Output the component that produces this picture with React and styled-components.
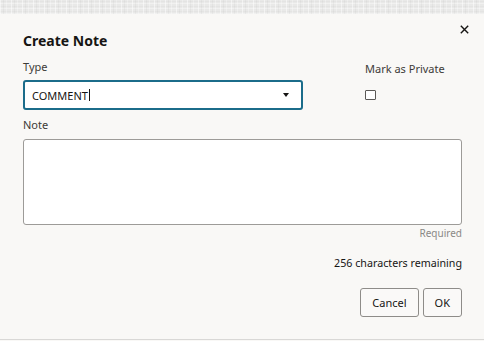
import React from "react";
import styled, { createGlobalStyle } from "styled-components";

const Global = createGlobalStyle`
  html, body { margin: 0; padding: 0; background: #f9f8f6; }
  body { font-family: "Noto Sans", "Open Sans", sans-serif; color: #161513; }
  * { box-sizing: border-box; }
`;

const Backdrop = styled.div`
  height: 14px;
  background-color: #e9e9e8;
  background-image:
    repeating-linear-gradient(90deg, rgba(255,255,255,0.5) 0 1px, transparent 1px 3px, rgba(0,0,0,0.03) 3px 4px, transparent 4px 6px, rgba(255,255,255,0.3) 6px 7px, transparent 7px 11px),
    repeating-linear-gradient(0deg, rgba(255,255,255,0.35) 0 1px, transparent 1px 2px, rgba(0,0,0,0.025) 2px 3px, transparent 3px 5px);
`;

const Dialog = styled.div`
  background: #f9f8f6;
  padding: 5px 22px 22px 23px;
  height: 326px;
  border-bottom: 1px solid #d9d8d6;
  display: flex;
  flex-direction: column;
`;

const Header = styled.div`
  display: flex;
  align-items: flex-start;
  justify-content: space-between;
`;

const Title = styled.h1`
  margin: 12px 0 0;
  font-size: 14px;
  line-height: 20px;
  font-weight: 700;
  color: #161513;
`;

const CloseButton = styled.button`
  width: 20px;
  height: 20px;
  margin-right: -12px;
  padding: 0;
  border: 0;
  background: transparent;
  display: flex;
  align-items: center;
  justify-content: center;
  color: #161513;
`;

const FormGrid = styled.div`
  display: grid;
  grid-template-columns: 280px 1fr;
  column-gap: 62px;
  margin-top: 8px;
`;

const Field = styled.div`
  display: flex;
  flex-direction: column;
  padding-top: ${(p) => p.$offset || 0}px;
`;

const Label = styled.label`
  font-size: 11px;
  line-height: 16px;
  color: #3d3b38;
  margin-bottom: ${(p) => p.$gap}px;
`;

const Select = styled.div`
  height: 30px;
  border: 2px solid #1b6c8a;
  border-radius: 3px;
  background: #fff;
  display: flex;
  align-items: center;
  padding: 0 12px 0 7px;
  font-size: 11px;
  color: #161513;
`;

const SelectValue = styled.span`
  flex: 1;
  display: flex;
  align-items: center;
`;

const Cursor = styled.span`
  display: inline-block;
  width: 1px;
  height: 12px;
  background: #161513;
  margin-left: 1px;
`;

const Caret = styled.span`
  width: 0;
  height: 0;
  border-left: 3.5px solid transparent;
  border-right: 3.5px solid transparent;
  border-top: 4px solid #161513;
`;

const Checkbox = styled.span`
  width: 11px;
  height: 10px;
  border: 1px solid #5b5956;
  border-radius: 1px;
  background: #fff;
`;

const NoteField = styled.div`
  display: flex;
  flex-direction: column;
  margin-top: 7px;
`;

const TextArea = styled.div`
  height: 86px;
  border: 1px solid #9d9b98;
  border-radius: 3px;
  background: #fff;
`;

const Hint = styled.div`
  text-align: right;
  font-size: 10px;
  line-height: 14px;
  color: #8a8886;
  margin-top: 1px;
`;

const Counter = styled.div`
  text-align: right;
  font-size: 10.7px;
  line-height: 16px;
  color: #161513;
  margin-top: 15px;
`;

const Actions = styled.div`
  display: flex;
  justify-content: flex-end;
  gap: 4px;
  margin-top: 17px;
`;

const Button = styled.button`
  height: 29px;
  padding: 0 11px;
  border: 1px solid #8e8c89;
  border-radius: 3px;
  background: #faf9f8;
  font-family: "Noto Sans", "Open Sans", sans-serif;
  font-size: 11px;
  color: #161513;
`;

export default function App() {
  return (
    <>
      <Global />
      <Backdrop />
      <Dialog>
        <Header>
          <Title>Create Note</Title>
          <CloseButton aria-label="Close">
            <svg width="9" height="9" viewBox="0 0 9 9">
              <path d="M0.8 0.8 L8.2 8.2 M8.2 0.8 L0.8 8.2" stroke="#161513" strokeWidth="1.4" />
            </svg>
          </CloseButton>
        </Header>
        <FormGrid>
          <Field>
            <Label $gap={5}>Type</Label>
            <Select>
              <SelectValue>
                COMMENT<Cursor />
              </SelectValue>
              <Caret />
            </Select>
          </Field>
          <Field $offset={2}>
            <Label $gap={13}>Mark as Private</Label>
            <Checkbox />
          </Field>
        </FormGrid>
        <NoteField>
          <Label $gap={6}>Note</Label>
          <TextArea />
          <Hint>Required</Hint>
        </NoteField>
        <Counter>256 characters remaining</Counter>
        <Actions>
          <Button>Cancel</Button>
          <Button>OK</Button>
        </Actions>
      </Dialog>
    </>
  );
}
